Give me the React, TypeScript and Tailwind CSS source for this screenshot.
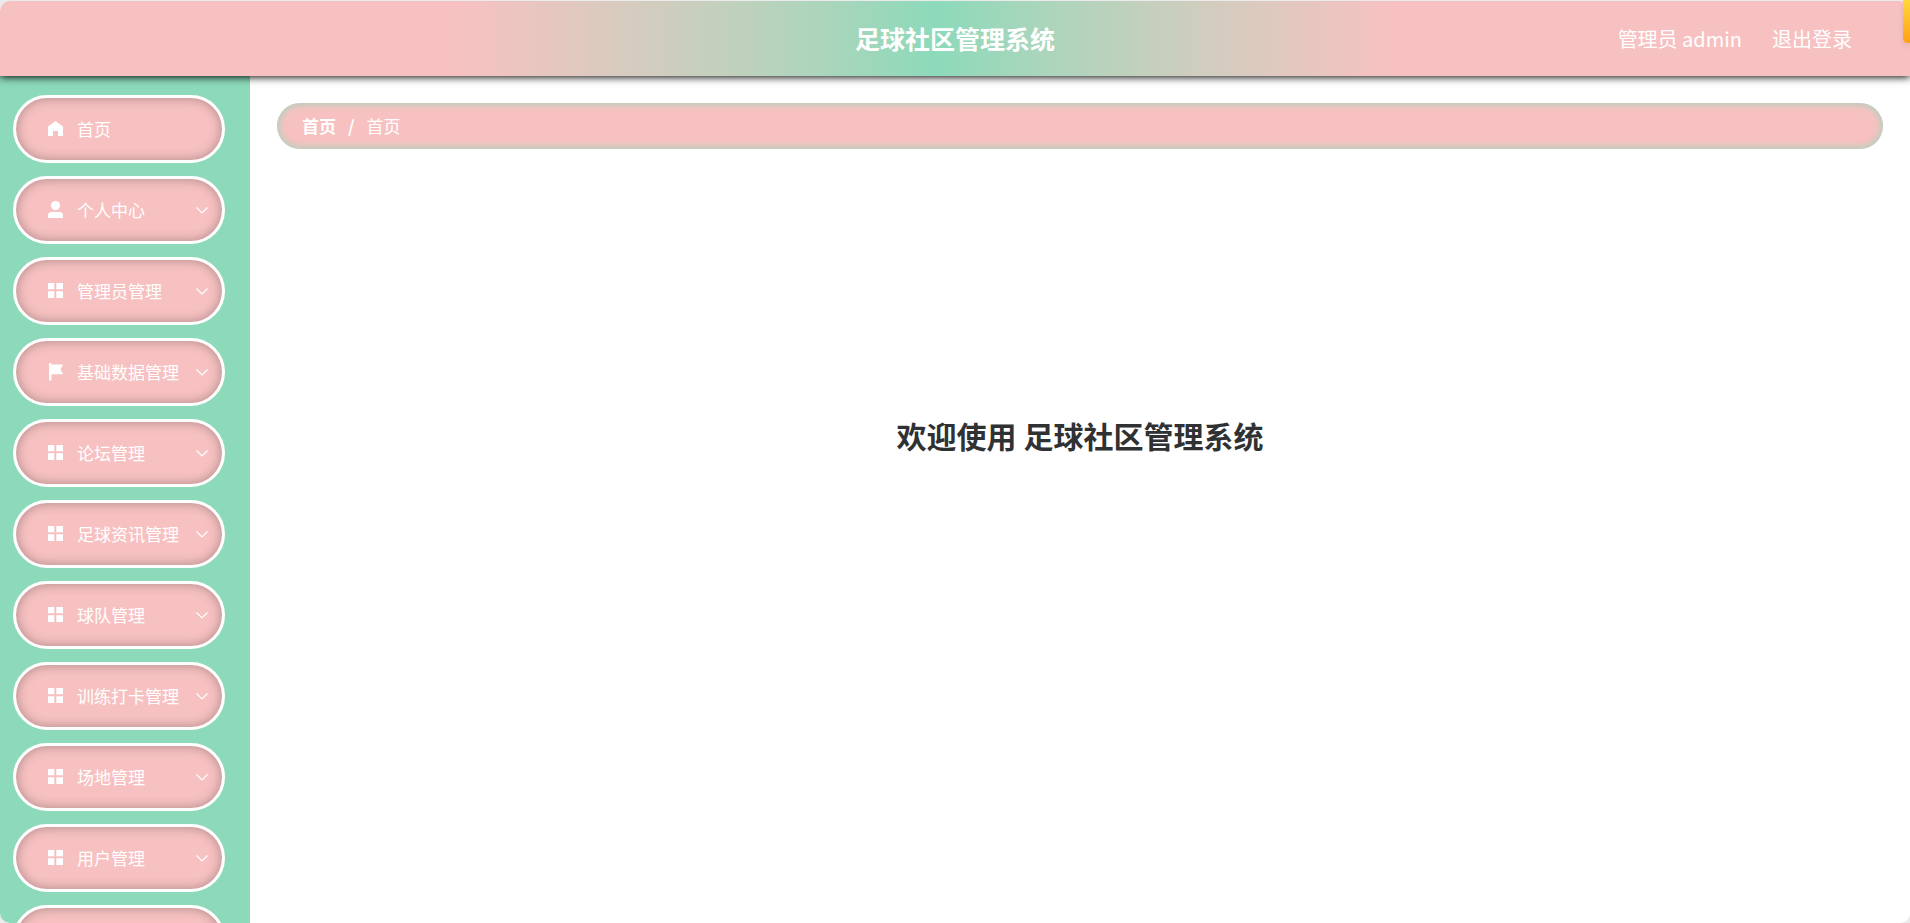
import React from "react";

type IconName = "home" | "user" | "menu" | "flag";

const menuList: { name: string; icon: IconName }[] = [
  { name: "首页", icon: "home" },
  { name: "个人中心", icon: "user" },
  { name: "管理员管理", icon: "menu" },
  { name: "基础数据管理", icon: "flag" },
  { name: "论坛管理", icon: "menu" },
  { name: "足球资讯管理", icon: "menu" },
  { name: "球队管理", icon: "menu" },
  { name: "训练打卡管理", icon: "menu" },
  { name: "场地管理", icon: "menu" },
  { name: "用户管理", icon: "menu" },
  { name: "", icon: "menu" },
];

const iconPaths: Record<IconName, string> = {
  home: "M8.500 1L16 6.500V16H11V11H6V16H1V6.500Z",
  user: "M8.500 0a4.600 4.600 0 1 1 0 9.200a4.600 4.600 0 0 1 0-9.200ZM1 17V14.500Q1 11 4.500 11H12.500Q16 11 16 14.500V17Z",
  menu: "M1 1H7.300V7.300H1ZM9.300 1H16V7.300H9.300ZM1 9.300H7.300V16H1ZM9.300 9.300H16V16H9.300Z",
  flag: "M2 0H4.500V1.500H16L13.500 6.300L16 11.300H4.500V17.500H2Z",
};

const MenuIcon = ({ name }: { name: IconName }) => (
  <svg className="size-[18px] shrink-0" viewBox="0 0 18 18" fill="currentColor">
    <path d={iconPaths[name]} />
  </svg>
);

const Header = () => (
  <header className="relative z-10 grid h-[75px] shrink-0 grid-cols-3 items-center bg-linear-to-r from-[#f7c1c1] from-24% via-[#8cdaba] via-49% to-[#f7c1c1] to-73% px-[58px] text-xl text-white shadow-[0_1px_8px_#000]">
    <h1 className="col-start-2 pb-0.5 text-center text-[25px] leading-9 font-bold">
      足球社区管理系统
    </h1>
    <div className="flex justify-end gap-[30px]">
      <span>管理员 admin</span>
      <button type="button">退出登录</button>
    </div>
  </header>
);

const Sidebar = () => (
  <nav className="w-[250px] shrink-0 overflow-hidden bg-[#8cdaba] pt-[19px] pl-[13px]">
    <ul className="flex flex-col gap-[13px]">
      {menuList.map((item) => (
        <li key={item.name}>
          <button
            type="button"
            className="flex h-[68px] w-[212px] items-center rounded-full border-3 border-white bg-[#f7c1c1] pr-[13px] pl-[31px] text-[17px] text-white shadow-[inset_0_0_12px_rgba(0,0,0,0.3)]"
          >
            <MenuIcon name={item.icon} />
            <span className="ml-3">{item.name}</span>
            {item.icon !== "home" && (
              <svg
                className="ml-auto h-3.5 w-3.5"
                viewBox="0 0 14 14"
                fill="none"
                stroke="currentColor"
                strokeWidth="1.2"
              >
                <path d="M1.500 4.500L7 10L12.500 4.500" />
              </svg>
            )}
          </button>
        </li>
      ))}
    </ul>
  </nav>
);

const App = () => {
  return (
    <div className="h-screen overflow-hidden bg-[#ebebeb] pt-px font-['Noto_Sans_CJK_SC',sans-serif]">
      <div className="flex h-full flex-col overflow-hidden rounded-[10px] bg-white">
        <Header />
        <div className="flex min-h-0 flex-1">
          <Sidebar />
          <main className="flex-1 px-[27px] pt-[27px]">
            <nav
              aria-label="breadcrumb"
              className="flex h-[46px] items-center rounded-full bg-[#f7c1c1] px-[25px] text-[17px] text-white shadow-[inset_0_0_8px_#8cdaba]"
            >
              <a href="#" className="font-bold">
                首页
              </a>
              <span className="mx-3 font-bold">/</span>
              <span>首页</span>
            </nav>
            <h2 className="mt-[264px] text-center text-3xl leading-11 font-bold text-[#303133]">
              欢迎使用 足球社区管理系统
            </h2>
          </main>
        </div>
      </div>
      {/* corner ribbon */}
      <div className="absolute top-0 right-0 z-20 h-[43px] w-[7px] rounded-bl-[5px] bg-linear-to-b from-[#ffd63a] to-[#ffa010] shadow-md" />
    </div>
  );
};

export default App;
